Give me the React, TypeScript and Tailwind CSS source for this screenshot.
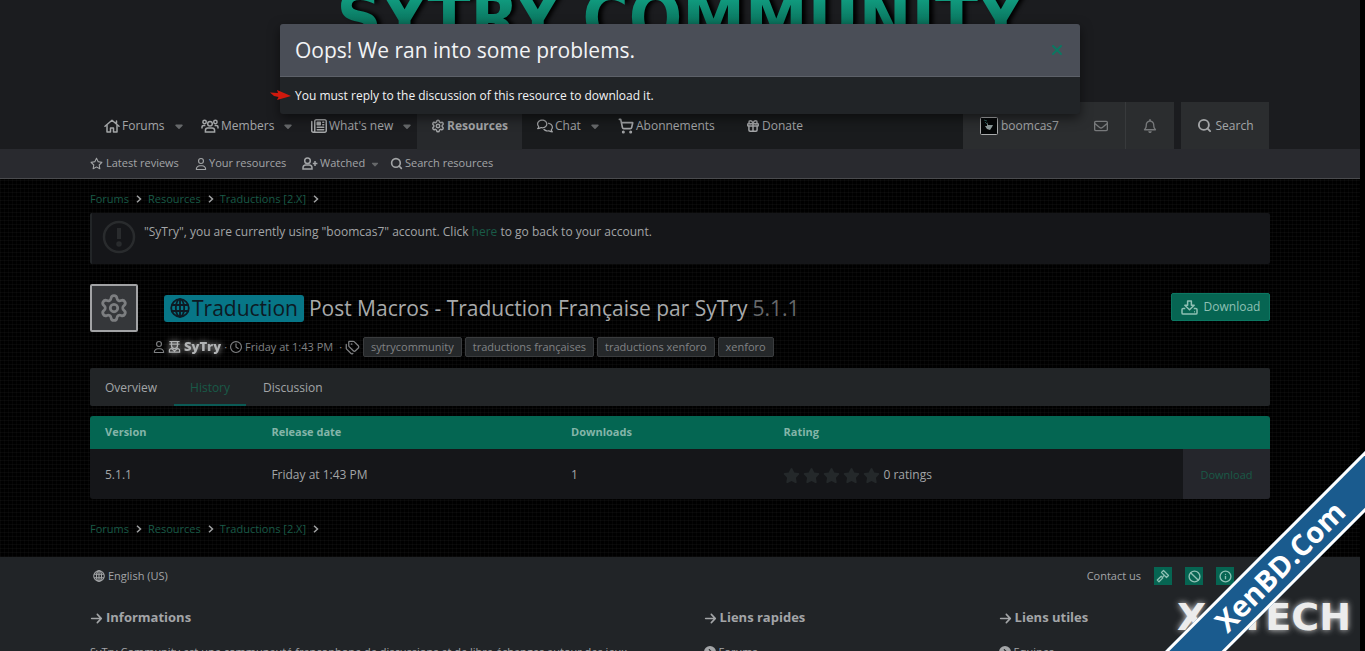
import React from 'react';
import {
  FaArrowRight,
  FaCaretDown,
  FaCircleChevronRight,
  FaRegBell,
  FaRegClock,
  FaRegComments,
  FaRegEnvelope,
  FaRegNewspaper,
  FaRegStar,
  FaRegUser,
  FaStar,
} from 'react-icons/fa6';
import { Ban, Gift, Info, Search, Settings, ShoppingCart, Tags, X } from 'lucide-react';

const HouseIcon = () => (
  <svg viewBox="0 0 16 14" className="h-3.5 w-4" fill="none" stroke="currentColor" strokeWidth="1.5" strokeLinecap="round" strokeLinejoin="round">
    <path d="M1 7.2 8 1.2l7 6M12.5 2v2.5" />
    <path d="M3 6.5V13h3.5V9h3v4H13V6.5" />
  </svg>
);

const MembersIcon = () => (
  <svg viewBox="0 0 18 14" className="h-3.5 w-[18px]" fill="none" stroke="currentColor" strokeWidth="1.5">
    <circle cx="3.6" cy="3" r="1.7" />
    <circle cx="14.4" cy="3" r="1.7" />
    <circle cx="9" cy="4.8" r="2.3" />
    <path d="M1 9.5V8.2c0-1 .8-1.7 1.8-1.7h1.6M17 9.5V8.2c0-1-.8-1.7-1.8-1.7h-1.6" />
    <path d="M4.4 13v-1.6c0-1.4 1-2.4 2.4-2.4h4.4c1.4 0 2.4 1 2.4 2.4V13z" />
  </svg>
);

const UserPlusIcon = () => (
  <svg viewBox="0 0 16 13" className="h-[13px] w-4" fill="none" stroke="currentColor" strokeWidth="1.5">
    <circle cx="5.5" cy="3.8" r="2.8" />
    <path d="M1 12v-1.2c0-1.6 1.2-2.8 2.8-2.8h3.4c1.6 0 2.8 1.2 2.8 2.8V12z" />
    <path d="M13 4v5M10.8 6.5h4.6" />
  </svg>
);

const GlobeIcon: React.FC<{ className: string }> = ({ className }) => (
  <svg viewBox="0 0 20 20" className={className} fill="none" stroke="currentColor" strokeWidth="1.8">
    <circle cx="10" cy="10" r="8.8" />
    <ellipse cx="10" cy="10" rx="4.2" ry="8.8" />
    <path d="M10 1v18M1.8 7h16.4M1.8 13h16.4" />
  </svg>
);

const RankIcon = () => (
  <svg viewBox="0 0 14 14" className="h-[13px] w-[13px]" fill="none" stroke="currentColor" strokeWidth="1.4">
    <path d="M1.5 1.7h11M1.5 4.4h11M3.8 2v4.2c0 1.8 1.4 3 3.2 3s3.2-1.2 3.2-3V2" />
    <path d="M1.5 13v-1.5c0-1.3 1-2.3 2.3-2.3l3.2 2.6 3.2-2.6c1.3 0 2.3 1 2.3 2.3V13z" />
  </svg>
);

const DownloadIcon = () => (
  <svg viewBox="0 0 18 16" className="h-[15px] w-[17px]" fill="none" stroke="currentColor" strokeWidth="1.6" strokeLinejoin="round">
    <path d="M7 1h4v4.5h3L9 10.5 4 5.5h3z" />
    <path d="M4.5 9H2.2C1.5 9 1 9.5 1 10.2v3.6c0 .7.5 1.2 1.2 1.2h13.6c.7 0 1.2-.5 1.2-1.2v-3.6c0-.7-.5-1.2-1.2-1.2h-2.3" />
    <path d="M14 12.5h.8" />
  </svg>
);

const GavelIcon = () => (
  <svg viewBox="0 0 14 14" className="h-3.5 w-3.5" fill="none" stroke="currentColor" strokeWidth="1.3" strokeLinejoin="round">
    <path d="M7.5 1.5 12.5 6.5 10.5 8.5 5.5 3.5zM8.3 6.3 6.7 7.8" />
    <path d="M5.2 7.2 1.3 11l1.7 1.7 3.9-3.8z" />
  </svg>
);

const AlertIcon = () => (
  <svg viewBox="0 0 34 34" className="h-[34px] w-[34px] shrink-0 text-[#292b2d]" fill="none" stroke="currentColor" strokeWidth="2.5">
    <circle cx="17" cy="17" r="15" />
    <path d="M17 8v11" strokeWidth="4" />
    <circle cx="17" cy="24" r="1.5" fill="currentColor" />
  </svg>
);

const RedArrow = () => (
  <svg viewBox="0 0 22 12" className="absolute -left-[11px] top-3 h-3 w-[22px]" fill="#d0190d">
    <path d="M1 3.5 9 4 8 1l14 6L8 11l1.5-3L5 7z" />
  </svg>
);

const Avatar = () => (
  <svg viewBox="0 0 18 18" className="h-[18px] w-[18px]">
    <rect x=".5" y=".5" width="17" height="17" rx="1" fill="#050708" stroke="#a9abac" />
    <path d="M7 5l1 3 5 0-1 2-2 3-3-1-2-3 2 0z" fill="#8c9a9a" />
    <path d="M4 3l3 1M5 5l2 2" stroke="#2f5f5c" />
  </svg>
);

interface NavItemProps {
  icon: React.ReactNode;
  label: string;
  menu?: boolean;
  className?: string;
}

const NavItem: React.FC<NavItemProps> = ({ icon, label, menu, className = '' }) => (
  <a href="#" className={`flex h-12 items-center gap-0.5 whitespace-nowrap ${className}`}>
    {icon}
    {label}
    {menu && <FaCaretDown className="ml-1.5 h-3 w-3 text-[#66686a]" />}
  </a>
);

const Breadcrumbs: React.FC = () => (
  <nav className="flex h-5 items-center text-[11px] text-[#195a47]">
    {['Forums', 'Resources', 'Traductions [2.X]'].map((crumb) => (
      <React.Fragment key={crumb}>
        <a href="#">{crumb}</a>
        <svg viewBox="0 0 6 8" className="ml-[7px] mr-1.5 h-2 w-1.5 text-[#a0a2a3]" fill="none" stroke="currentColor" strokeWidth="1.5">
          <path d="M1 .8 4.5 4 1 7.2" />
        </svg>
      </React.Fragment>
    ))}
  </nav>
);

const tags = ['sytrycommunity', 'traductions françaises', 'traductions xenforo', 'xenforo'];

const columns = [
  { label: 'Informations', text: 'SyTry Community est une communauté francophone de discussions et de libre échanges autour des jeux', link: false },
  { label: 'Liens rapides', text: 'Forums', link: true },
  { label: 'Liens utiles', text: 'Equipes', link: true },
];

export default function App() {
  return (
    <div className="relative h-screen overflow-hidden bg-black pr-[5px] font-['Open_Sans',sans-serif] text-xs text-[#a3a5a7]">
      <header className="bg-[#1b1c1f]">
        <div className="flex h-[102px] justify-center overflow-hidden">
          <div className="-mt-[38px] h-[112px] bg-linear-to-b from-[#11a184] from-30% to-[#096b56] to-60% bg-clip-text font-['DejaVu_Sans_Condensed','DejaVu_Sans',sans-serif] text-[70px] leading-[112px] font-bold whitespace-nowrap text-transparent drop-shadow-[4px_0_2px_#000]">
            SYTRY COMMUNITY
          </div>
        </div>
        <div className="mx-auto flex h-[47px] max-w-[1180px] items-stretch">
          <nav className="flex grow">
            <NavItem className="w-[111px] pl-3.5" icon={<HouseIcon />} label="Forums" menu />
            <NavItem className="w-[110px]" icon={<MembersIcon />} label="Members" menu />
            <NavItem className="w-[106px]" icon={<FaRegNewspaper size={16} />} label="What's new" menu />
            <NavItem className="w-[105px] justify-center bg-[#27292c] font-bold" icon={<Settings size={14} strokeWidth={2.5} />} label="Resources" />
            <div className="flex grow bg-[#191b1d] pl-[15px]">
              <NavItem className="w-[81px]" icon={<FaRegComments size={16} />} label="Chat" menu />
              <NavItem className="w-32" icon={<ShoppingCart size={16} strokeWidth={2.5} />} label="Abonnements" />
              <NavItem icon={<Gift size={14} strokeWidth={2.5} />} label="Donate" />
            </div>
          </nav>
          <div className="mr-[7px] flex bg-[#2b2d2f]">
            <a href="#" className="flex w-[114px] items-center gap-[3px] pl-[17px]">
              <Avatar />
              boomcas7
            </a>
            <button aria-label="Conversations" className="flex w-[49px] items-center justify-center border-r border-[#383a3c] text-[#77797b]">
              <FaRegEnvelope size={14} />
            </button>
            <button aria-label="Alerts" className="flex w-12 items-center justify-center text-[#77797b]">
              <FaRegBell size={14} />
            </button>
          </div>
          <button className="mr-px flex w-[88px] items-center justify-center gap-1 bg-[#2b2d2f]">
            <Search size={15} strokeWidth={3} />
            Search
          </button>
        </div>
      </header>

      <nav className="h-[30px] border-b border-[#4a4b4e] bg-[#292a2f]">
        <div className="mx-auto flex h-full max-w-[1180px] items-center text-[11px]">
          <a href="#" className="flex w-[105px] items-center gap-[3px] whitespace-nowrap"><FaRegStar size={13} />Latest reviews</a>
          <a href="#" className="flex w-[107px] items-center gap-0.5 whitespace-nowrap"><FaRegUser size={12} />Your resources</a>
          <a href="#" className="flex w-[88px] items-center gap-0.5 whitespace-nowrap"><UserPlusIcon />Watched<FaCaretDown className="ml-[3px] h-2.5 w-2.5 text-[#66686a]" /></a>
          <a href="#" className="flex items-center gap-0.5 whitespace-nowrap"><Search size={13} strokeWidth={3} />Search resources</a>
        </div>
      </nav>

      <main className="bg-[repeating-linear-gradient(0deg,#ffffff08_0,#ffffff08_1px,transparent_1px,transparent_4px),repeating-linear-gradient(90deg,#ffffff06_0,#ffffff06_1px,transparent_1px,transparent_4px)] pb-[18px] pt-2.5">
        <div className="mx-auto max-w-[1180px]">
          <Breadcrumbs />

          <div className="mt-1 flex h-[51px] rounded-xs border-l-2 border-[#222527] bg-[#151619] pl-2.5 pt-[7px]">
            <AlertIcon />
            <p className="ml-2 leading-6">
              "SyTry", you are currently using "boomcas7" account. Click <a href="#" className="text-[#195a47]">here</a> to go back to your account.
            </p>
          </div>

          <div className="mt-5 flex items-start">
            <div className="flex h-12 w-12 items-center justify-center rounded-xs border-2 border-[#a2a3a5] bg-[#35373a] text-[#7c7e80]">
              <Settings size={30} strokeWidth={2.2} />
            </div>
            <div className="ml-[15px] grow">
              <h1 className="ml-[11px] flex h-12 items-center text-[21px] text-[#a8aaab]">
                <span className="mr-[5px] flex h-[27px] items-center gap-0.5 rounded-[3px] bg-[#077687] px-1.5 text-[#0d1a24]">
                  <GlobeIcon className="h-5 w-5" />
                  Traduction
                </span>
                Post Macros - Traduction Française par SyTry
                <span className="ml-[5px] text-[#66686a]">5.1.1</span>
              </h1>
              <div className="mt-[5px] flex h-5 items-center gap-[3px] text-[11px] text-[#808284]">
                <FaRegUser size={12} />
                <a href="#" className="flex items-center gap-[3px] text-[13px] font-extrabold text-[#b0b2b3] [filter:drop-shadow(0_0_3px_#aaa)]">
                  <RankIcon />
                  SyTry
                </a>
                <span>·</span>
                <FaRegClock size={12} />
                <time className="mr-[3px]">Friday at 1:43 PM</time>
                <span>·</span>
                <Tags size={15} strokeWidth={2} />
                {tags.map((tag) => (
                  <a key={tag} href="#" className="flex h-5 items-center whitespace-nowrap rounded-xs border border-[#3a3c3e] bg-[#25282a] px-[7px]">
                    {tag}
                  </a>
                ))}
              </div>
            </div>
            <a href="#" className="mt-[9px] flex h-7 w-[99px] items-center justify-center gap-1.5 rounded-xs border border-[#0c7762] bg-[#066552] text-[#8fc0b4]">
              <DownloadIcon />
              Download
            </a>
          </div>

          <nav className="mt-[11px] flex h-[38px] rounded-xs bg-[#222527] pl-[15px] leading-10">
            <a href="#">Overview</a>
            <a href="#" className="ml-[17px] h-[38px] border-b-2 border-[#0b5a55] px-4 text-[#195a47]">History</a>
            <a href="#" className="ml-[17px]">Discussion</a>
          </nav>

          <table className="mt-2.5 w-full table-fixed overflow-hidden rounded-[3px] text-left">
            <thead className="bg-[#046652] text-[11px] text-[#84b5a9]">
              <tr className="h-[33px]">
                <th className="w-[14.1%] pl-[15px] font-bold">Version</th>
                <th className="w-[25.4%] pl-[15px] font-bold">Release date</th>
                <th className="w-[18%] pl-[15px] font-bold">Downloads</th>
                <th className="pl-[15px] font-bold">Rating</th>
                <th className="w-[87px]" aria-label="Download" />
              </tr>
            </thead>
            <tbody className="bg-[#151619]">
              <tr className="h-[50px]">
                <td className="pl-[15px] pt-0.5">5.1.1</td>
                <td className="pl-[15px] pt-0.5">Friday at 1:43 PM</td>
                <td className="pl-[15px] pt-0.5">1</td>
                <td className="pl-[15px] pt-0.5">
                  <span className="flex items-center gap-[3px]">
                    {[0, 1, 2, 3, 4].map((n) => (
                      <FaStar key={n} size={17} className="text-[#24282a]" />
                    ))}
                    0 ratings
                  </span>
                </td>
                <td className="bg-[#25262c] pt-0.5 text-center text-[11px]"><a href="#" className="text-[#195a47]">Download</a></td>
              </tr>
            </tbody>
          </table>

          <div className="mt-5">
            <Breadcrumbs />
          </div>
        </div>
      </main>

      <footer className="h-40 bg-[#212427] pt-2">
        <div className="mx-auto max-w-[1180px]">
          <div className="flex h-[22px] items-center justify-between pl-[3px] pr-9 text-[11px]">
            <a href="#" className="flex items-center gap-[3px]"><GlobeIcon className="h-3 w-3" />English (US)</a>
            <div className="flex items-center gap-[13px] text-[#8fc0b4]">
              <a href="#" className="text-[#a3a5a7]">Contact us</a>
              <a href="#" aria-label="Rules" className="flex h-[18px] w-[18px] items-center justify-center bg-[#066552]"><GavelIcon /></a>
              <a href="#" aria-label="Privacy" className="flex h-[18px] w-[18px] items-center justify-center bg-[#066552]"><Ban size={13} strokeWidth={2.5} /></a>
              <a href="#" aria-label="Help" className="flex h-[18px] w-[18px] items-center justify-center bg-[#066552]"><Info size={13} strokeWidth={2.5} /></a>
            </div>
          </div>
          <div className="mt-[21px] grid grid-cols-[52%_25%_23%]">
            {columns.map(({ label, text, link }) => (
              <section key={label}>
                <h3 className="flex h-5 items-center gap-[3px] text-[13px] font-bold"><FaArrowRight size={13} />{label}</h3>
                <p className="mt-3.5 flex h-5 items-center gap-[3px] whitespace-nowrap text-[11px]">
                  {link && <FaCircleChevronRight size={12} />}
                  {text}
                </p>
              </section>
            ))}
          </div>
        </div>
      </footer>

      <div role="dialog" aria-label="Error" className="absolute inset-x-0 top-6 mx-auto mr-[285px] max-w-[800px] rounded-[3px] bg-[#212427] shadow-[0_4px_12px_#0008]">
        <div className="flex h-[53px] items-center justify-between rounded-t-[3px] border-b border-[#5d6169] bg-[#4a4e57] px-[15px]">
          <h2 className="text-[21px] text-[#f2f3f5]">Oops! We ran into some problems.</h2>
          <button aria-label="Close" className="text-[#0c7762]"><X size={16} strokeWidth={3} /></button>
        </div>
        <div className="relative h-[37px] px-[15px] leading-[37px] text-[#f2f3f5]">
          <RedArrow />
          You must reply to the discussion of this resource to download it.
        </div>
      </div>

      <div className="absolute bottom-4 right-[14px] flex h-9 w-[174px] items-center justify-between font-['DejaVu_Sans',sans-serif] text-[38px] leading-9 font-bold text-[#ececec] [text-shadow:0_0_6px_#ddd]">
        <span>X</span>
        <span>TECH</span>
      </div>
      <div className="absolute -right-[125px] bottom-[63px] flex h-[43px] w-[420px] -rotate-45 items-center justify-center border-y-[3px] border-white bg-[#1a5b8e] text-[29px] font-bold text-white">
        XenBD.Com
      </div>
    </div>
  );
}
